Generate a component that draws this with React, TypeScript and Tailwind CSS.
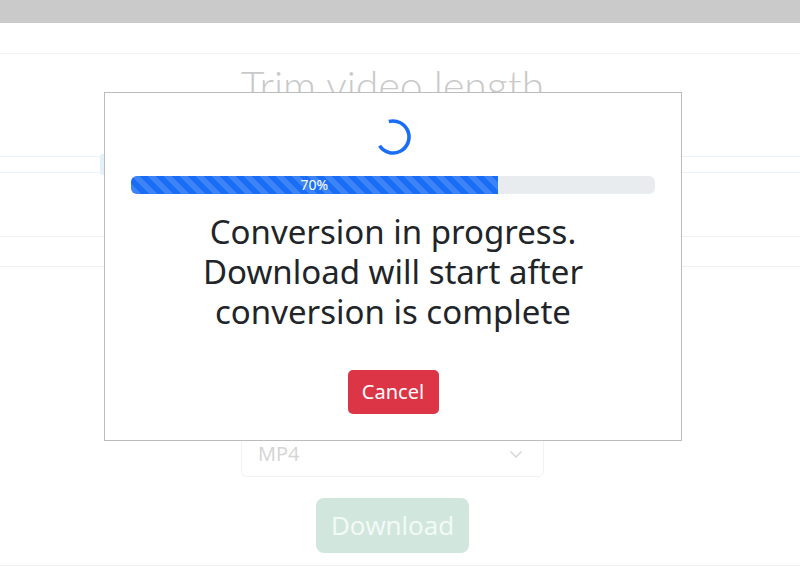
import React from "react";

function Spinner() {
  const cx = 18, cy = 18, r = 16;
  const a0 = (-105 * Math.PI) / 180;
  const a1 = (147 * Math.PI) / 180;
  const x0 = cx + r * Math.cos(a0), y0 = cy + r * Math.sin(a0);
  const x1 = cx + r * Math.cos(a1), y1 = cy + r * Math.sin(a1);
  return (
    <svg width="36" height="36" viewBox="0 0 36 36">
      <path
        d={`M ${x0} ${y0} A ${r} ${r} 0 1 1 ${x1} ${y1}`}
        fill="none"
        stroke="#1a6ef5"
        strokeWidth="3.6"
      />
    </svg>
  );
}

export default function App() {
  return (
    <div className="relative w-[800px] h-[585px] overflow-hidden bg-white font-['Open_Sans',sans-serif]">
      {/* faded page */}
      <div className="h-[23px] bg-[#cacaca]" />
      <div className="h-[30px]" />
      <div className="border-t border-[#f3f3f3] h-[103px]">
        <div className="w-[785px] flex justify-center">
          <div className="mt-[4px] text-[41px] leading-[56px] font-light text-[#c9c9c9] font-['Lato',sans-serif]">
            Trim video length
          </div>
        </div>
      </div>
      <div className="relative h-[17px] border-y border-[#e8f3fa]">
        <div className="absolute left-[100px] top-[-3px] w-[6px] h-[21px] rounded-l-[3px] bg-[#e3f1f9]" />
      </div>
      <div className="h-[63px]" />
      <div className="h-[30px] border-t border-[#f1f1f1]" />
      <div className="border-t border-[#f1f1f1] h-[164px]" />
      <div className="w-[785px] flex justify-center">
        <div className="w-[303px] h-[47px] border border-[#f2f2f2] rounded-[6px] flex items-center justify-between px-[16px]">
          <span className="text-[20px] text-[#d4d4d4]">MP4</span>
          <svg width="14" height="10" viewBox="0 0 14 10" className="mr-[4px]">
            <path d="M1.5 2.5 L7 8 L12.5 2.5" fill="none" stroke="#d8d8d8" strokeWidth="1.6" />
          </svg>
        </div>
      </div>
      <div className="w-[785px] flex justify-center mt-[21px]">
        <div className="w-[153px] h-[55px] rounded-[8px] bg-[#d1e7dd] flex items-center justify-center text-[26px] text-[#f4faf7]">
          Download
        </div>
      </div>
      <div className="mt-[12px] border-t border-[#f1f1f1]" />

      {/* modal */}
      <div className="absolute left-[104px] top-[92px] w-[578px] h-[349px] bg-white border border-[#bcbcbc] flex flex-col items-center px-[26px] font-['Noto_Sans',sans-serif]">
        <div className="mt-[26px]">
          <Spinner />
        </div>
        <div className="mt-[21px] w-full h-[18px] rounded-[6px] bg-[#e9ecef] overflow-hidden flex">
          <div
            className="h-full bg-[#1a6ef5] bg-[linear-gradient(45deg,rgba(255,255,255,.15)_25%,transparent_25%,transparent_50%,rgba(255,255,255,.15)_50%,rgba(255,255,255,.15)_75%,transparent_75%,transparent)] bg-[length:16px_16px] flex items-center justify-center text-[14px] leading-none text-white"
            style={{ width: "70%" }}
          >
            70%
          </div>
        </div>
        <div className="mt-[18px] text-center text-[33px] leading-[40px] text-[#212529]">
          Conversion in progress.
          <br />
          Download will start after
          <br />
          conversion is complete
        </div>
        <div className="mt-[38px] w-[91px] h-[44px] rounded-[5px] bg-[#dc3545] flex items-center justify-center text-[20px] text-white">
          Cancel
        </div>
      </div>
    </div>
  );
}
